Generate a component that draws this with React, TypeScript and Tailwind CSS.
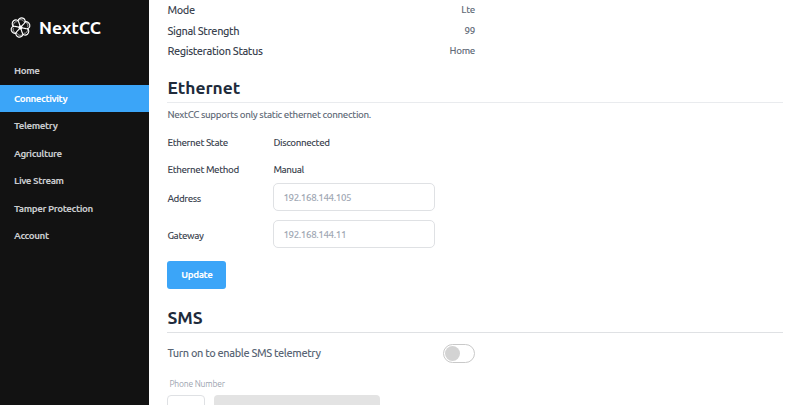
const nav = ["Home", "Connectivity", "Telemetry", "Agriculture", "Live Stream", "Tamper Protection", "Account"];
const info = [["Mode", "Lte"], ["Signal Strength", "99"], ["Registeration Status", "Home"]];
const angles = [0, 60, 120, 180, 240, 300];

function Logo() {
  return (
    <svg className="mb-[2px] h-[21px] w-[21px]" viewBox="-12 -12 24 24" fill="none" stroke="#fff" strokeWidth="1.3">
      {angles.map((a) => (
        <g key={a} transform={`rotate(${a + 10})`}>
          <path d="M-4.4-6.8C-4.2-9.6-2-11.3 .8-11C3.8-10.4 4.8-7.8 3.4-5.4L.6-1" />
          <path d="M-4.4-7C-2-9.6 1.2-9.4 2.4-7.4" strokeWidth="0.7" />
        </g>
      ))}
      <circle r="2.3" fill="#fff" stroke="none" />
    </svg>
  );
}

export default function App() {
  return (
    <div className="flex h-[405px] w-[800px] overflow-hidden bg-white font-['Ubuntu','Noto_Sans',sans-serif] text-[9.8px] text-[#3c4450]">
      <aside className="w-[149px] shrink-0 bg-[#121212]">
        <div className="flex h-[57px] items-center gap-2 pl-[10px]">
          <Logo />
          <span className="pb-px text-[17.4px] font-bold leading-none text-white">NextCC</span>
        </div>
        <nav className="font-semibold tracking-[-0.42px] text-[#c9cbce]">
          {nav.map((n) => (
            <div key={n} className={n === "Connectivity" ? "flex h-[27.5px] items-center bg-[#3ba5f8] pl-[14px] pt-[2px] text-white" : "flex h-[27.5px] items-center pl-[14px] pt-[2px]"}>{n}</div>
          ))}
        </nav>
      </aside>
      <main className="w-[634px] pl-[18.4px]">
        <div className="w-[307.5px] font-medium">
          {info.map(([k, v]) => (
            <div key={k} className="flex h-[20.6px] items-center justify-between">
              <span className="text-[11px] tracking-[-0.38px]">{k}</span>
              <span className="tracking-[-0.36px] text-[#626b78]">{v}</span>
            </div>
          ))}
        </div>
        <h2 className="mt-[14px] flex h-[27px] items-center border-b border-[#e9ebee] pb-[2px] text-[17.4px] font-bold text-[#202b3b]">Ethernet</h2>
        <p className="mt-[5px] h-[14px] font-medium leading-[14px] tracking-[-0.36px] text-[#626b78]">NextCC supports only static ethernet connection.</p>
        <div className="mt-[6px] grid w-[268px] grid-cols-[106px_162px] items-center font-medium tracking-[-0.4px]">
          <span className="flex h-[27.5px] items-center pt-[3px]">Ethernet State</span>
          <span className="pt-[3px]">Disconnected</span>
          <span className="flex h-[27.5px] items-center pt-[2px]">Ethernet Method</span>
          <span className="pt-[2px]">Manual</span>
          <span className="flex h-7 items-center pt-[5px]">Address</span>
          <input className="h-7 w-[162px] rounded-[5px] border border-[#dfe1e4] px-[9px] pt-px tracking-[-0.38px] outline-none placeholder:text-[#a1a8b4]" placeholder="192.168.144.105" />
          <span className="mt-[9px] flex h-7 items-center pt-[5px]">Gateway</span>
          <input className="mt-[9px] h-7 w-[162px] rounded-[5px] border border-[#dfe1e4] px-[9px] pt-px tracking-[-0.38px] outline-none placeholder:text-[#a1a8b4]" placeholder="192.168.144.11" />
        </div>
        <button className="mt-[13px] block h-[28px] w-[59px] rounded-[3px] bg-[#3ba5f8] pt-[2px] font-semibold tracking-[-0.42px] text-white">Update</button>
        <h2 className="mt-[16px] flex h-[28px] items-center border-b border-[#dfe1e4] pb-px text-[17.4px] font-bold text-[#202b3b]">SMS</h2>
        <div className="mt-[11px] flex h-[19px] w-[307.5px] items-center justify-between">
          <span className="pb-px text-[11px] font-medium tracking-[-0.39px] text-[#596575]">Turn on to enable SMS telemetry</span>
          <span className="flex h-[19px] w-[32px] items-center rounded-full border border-[#c9c9c9] pl-[1px]">
            <span className="h-[15px] w-[15px] rounded-full bg-[#d3d3d3]" />
          </span>
        </div>
        <div className="mt-[14px] h-[14px] pl-[2px] text-[8.5px] leading-[15px] tracking-[-0.18px] text-[#9ca3af]">Phone Number</div>
        <div className="mt-[4px] flex gap-[9px]">
          <span className="h-[28px] w-[38px] rounded-[4px] border border-[#dfe1e4]" />
          <span className="h-[28px] w-[166px] rounded-[4px] bg-[#e3e3e3]" />
        </div>
      </main>
    </div>
  );
}
